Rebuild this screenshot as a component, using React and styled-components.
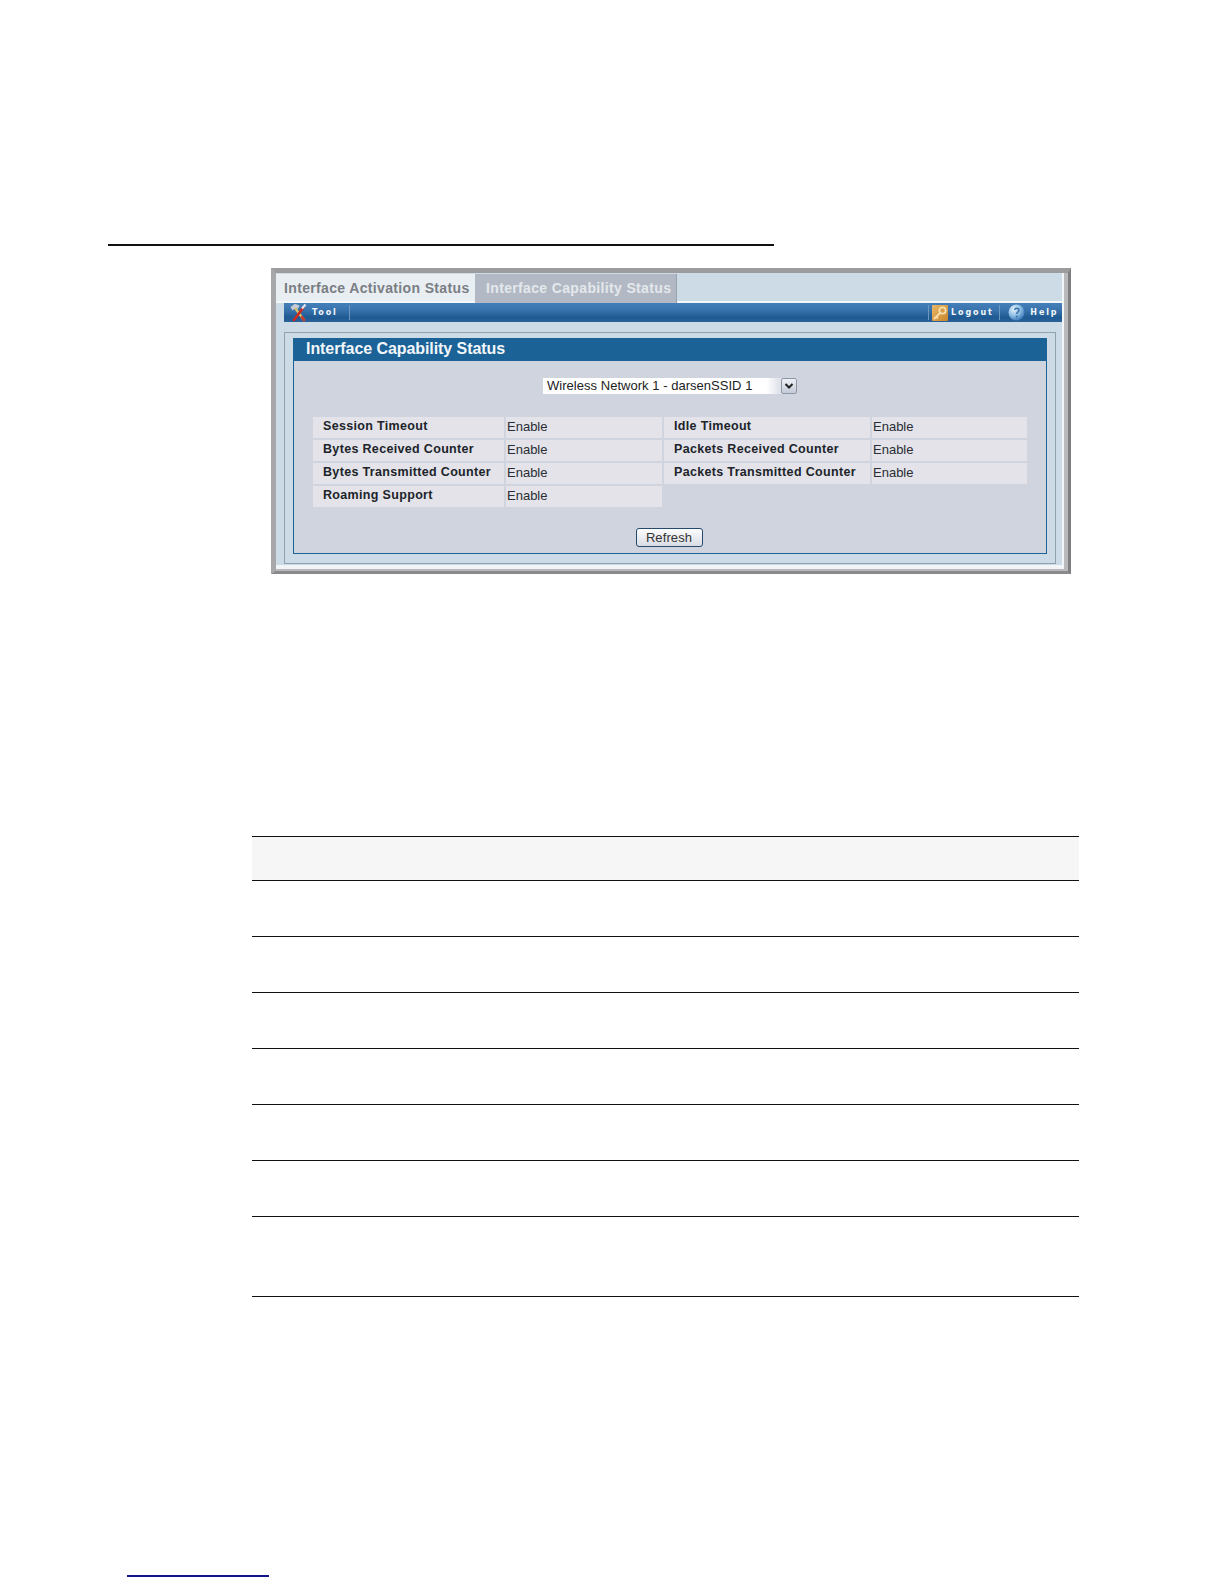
import React from "react";
import styled, { createGlobalStyle } from "styled-components";

const Global = createGlobalStyle`
  html, body { margin: 0; padding: 0; background: #fff; }
  body { font-family: "Liberation Sans", Arial, sans-serif; }
`;

const Page = styled.div`
  width: 1224px;
  height: 1584px;
  padding-top: 244px;
  box-sizing: border-box;
  overflow: hidden;
  display: flex;
  flex-direction: column;
`;

const TopRule = styled.div`
  width: 666px;
  height: 1.5px;
  margin-left: 108px;
  background: #111;
`;

const Frame = styled.div`
  width: 800px;
  height: 306px;
  margin: 22.5px 0 0 271px;
  box-sizing: border-box;
  border-style: solid;
  border-width: 5px 3px 3px 5px;
  border-color: #9c9c9e #7e7e80 #8a8a8c #a8a8ab;
  background: #cddbe6;
  box-shadow: inset -4px -2px 0 #b9b9bb, inset -6px -6px 0 #f2f5f7;
`;

const TabBar = styled.div`
  height: 30px;
  margin-right: 6px;
  box-sizing: border-box;
  border-bottom: 2px solid #f4f7f9;
  display: flex;
  align-items: flex-start;
  padding-top: 1px;
`;

const Tab = styled.div`
  height: ${(p) => (p.$active ? 29 : 27)}px;
  width: ${(p) => (p.$active ? 202 : 199)}px;
  box-sizing: border-box;
  padding-left: ${(p) => (p.$active ? 11 : 8)}px;
  padding-top: 6px;
  font-size: 14px;
  font-weight: bold;
  letter-spacing: 0.35px;
  white-space: nowrap;
  color: ${(p) => (p.$active ? "#e4e8ec" : "#7a7e84")};
  background: ${(p) => (p.$active ? "#b2b9c4" : "#e9eef3")};
  border-right: ${(p) => (p.$active ? "1px solid #9aa2ad" : "0")};
  position: relative;
  z-index: 1;
`;

const Toolbar = styled.div`
  height: 19px;
  margin: 0 6px 0 8px;
  background: linear-gradient(#447fb9 0%, #3a74ae 35%, #1f5a93 75%, #2b6098 100%);
  display: flex;
  align-items: center;
  font-family: "DejaVu Sans", sans-serif;
  font-weight: bold;
  font-size: 8px;
  letter-spacing: 1.9px;
  color: #f2f6fa;
`;

const ToolItem = styled.div`
  display: flex;
  align-items: center;
  height: 19px;
  margin-left: ${(p) => p.$ml || 0}px;
  gap: ${(p) => p.$gap || 3}px;
`;

const Sep = styled.div`
  width: 1px;
  height: 15px;
  margin-left: ${(p) => p.$ml || 0}px;
  background: #6c97c0;
`;

const Spacer = styled.div`
  flex: 1;
`;

const EndGap = styled.div`
  flex: 0 0 3.5px;
`;

const Outer = styled.div`
  width: 772px;
  height: 232px;
  margin: 10px 0 0 8px;
  box-sizing: border-box;
  border: 1px solid #8ea2ad;
  padding: 5px 0 0 8px;
`;

const Panel = styled.div`
  width: 754px;
  height: 216px;
  box-sizing: border-box;
  border: 1px solid #1b6296;
  background: #d0d4df;
  display: flex;
  flex-direction: column;
`;

const PanelHead = styled.div`
  height: 22px;
  background: #1b6296;
  color: #f2f6fa;
  font-size: 16px;
  font-weight: bold;
  line-height: 20px;
  letter-spacing: -0.07px;
  padding-left: 12px;
`;

const SelectBox = styled.div`
  align-self: center;
  width: 254px;
  height: 16px;
  margin-top: 17px;
  display: flex;
  background: linear-gradient(90deg, #fff 0%, #fff 88%, #dfe2e9 93%);
  font-size: 13px;
  line-height: 15px;
  color: #222;
  position: relative;
`;

const SelectText = styled.span`
  flex: 1;
  padding-left: 4px;
  letter-spacing: 0.03px;
  white-space: nowrap;
`;

const SelectArrow = styled.div`
  width: 16px;
  height: 16px;
  box-sizing: border-box;
  border: 1px solid #8f96a3;
  border-radius: 2px;
  background: linear-gradient(#eef0f5, #c3cad8);
  display: flex;
  align-items: center;
  justify-content: center;
`;

const DataGrid = styled.div`
  display: grid;
  grid-template-columns: 191px 156px 206px 155px;
  grid-auto-rows: 21px;
  column-gap: 2px;
  row-gap: 2px;
  margin: 23px 0 0 19px;
`;

const Label = styled.div`
  background: #e3e3e9;
  padding: 2px 0 0 10px;
  font-size: 12.5px;
  line-height: 15px;
  font-weight: bold;
  letter-spacing: 0.33px;
  color: #20242a;
  white-space: nowrap;
`;

const Value = styled.div`
  background: #e3e3e9;
  padding: 2px 0 0 1px;
  font-size: 13px;
  line-height: 15px;
  color: #2a2e34;
`;

const Refresh = styled.button`
  align-self: center;
  width: 67px;
  height: 19px;
  margin: 21px 2px 0 0;
  padding: 0;
  box-sizing: border-box;
  border: 1px solid #26496e;
  border-radius: 3px;
  background: linear-gradient(#fdfdfe, #d9dce4);
  font-family: "Liberation Sans", Arial, sans-serif;
  font-size: 13px;
  line-height: 17px;
  letter-spacing: 0.1px;
  color: #333;
`;

const Table = styled.div`
  width: 827px;
  margin: 262px 0 0 252px;
  display: flex;
  flex-direction: column;
`;

const HeaderRow = styled.div`
  height: 45px;
  box-sizing: border-box;
  background: #f6f6f6;
  border-top: 1.5px solid #111;
  border-bottom: 1.5px solid #111;
`;

const Row = styled.div`
  height: ${(p) => p.$h}px;
  box-sizing: border-box;
  border-bottom: 1.5px solid #111;
`;

const FootLink = styled.div`
  width: 142px;
  height: 1.5px;
  margin: 278px 0 0 127px;
  background: #14148a;
`;

const ToolsIcon = () => (
  <svg width="17" height="19" viewBox="0 0 17 19">
    <path d="M5 5 L14 17" stroke="#d8c06a" strokeWidth="2.4" strokeLinecap="round" />
    <path d="M12 14 L14 17" stroke="#c9352a" strokeWidth="2.4" strokeLinecap="round" />
    <path d="M13 5 L4 17" stroke="#cf2a20" strokeWidth="2.6" strokeLinecap="round" />
    <path d="M0.5 4 L5 0.8 L9.5 2.5 L8 6 L5.5 4.8 L2.5 7.5 Z" fill="#c6ccd3" />
    <path d="M12 5.5 L15.5 1.5" stroke="#e7e9ec" strokeWidth="2" />
  </svg>
);

const KeyIcon = () => (
  <svg width="16" height="16" viewBox="0 0 16 16">
    <defs>
      <linearGradient id="k" x1="0" y1="0" x2="1" y2="1">
        <stop offset="0" stopColor="#e9b667" />
        <stop offset="1" stopColor="#c9862c" />
      </linearGradient>
    </defs>
    <rect width="16" height="16" rx="1" fill="url(#k)" />
    <circle cx="10.5" cy="5.5" r="3.2" fill="none" stroke="#f7dfae" strokeWidth="1.8" />
    <path d="M8.2 7.8 L2 14 M4.2 11.8 L6 13.4" stroke="#f7dfae" strokeWidth="1.8" fill="none" />
  </svg>
);

const HelpIcon = () => (
  <svg width="17" height="17" viewBox="0 0 17 17">
    <defs>
      <radialGradient id="h" cx="0.35" cy="0.3" r="0.8">
        <stop offset="0" stopColor="#e4f2fb" />
        <stop offset="0.5" stopColor="#8fbfe6" />
        <stop offset="1" stopColor="#2a6aae" />
      </radialGradient>
    </defs>
    <circle cx="8.5" cy="8.5" r="8" fill="url(#h)" />
    <path d="M6.6 6 C6.8 3.8 11 3.8 11 6.3 C11 8 8.7 8 8.7 10" fill="none" stroke="#3f76ad" strokeWidth="1.6" />
    <circle cx="8.7" cy="12.6" r="1.1" fill="#3f76ad" />
  </svg>
);

const rows = [
  ["Session Timeout", "Enable", "Idle Timeout", "Enable"],
  ["Bytes Received Counter", "Enable", "Packets Received Counter", "Enable"],
  ["Bytes Transmitted Counter", "Enable", "Packets Transmitted Counter", "Enable"],
  ["Roaming Support", "Enable"],
];

const tableRows = [56, 56, 56, 56, 56, 56, 80];

export default function App() {
  return (
    <Page>
      <Global />
      <TopRule />
      <Frame>
        <TabBar>
          <Tab>Interface Activation Status</Tab>
          <Tab $active>Interface Capability Status</Tab>
        </TabBar>
        <Toolbar>
          <ToolItem $ml={6} $gap={5}>
            <ToolsIcon />
            <span>Tool</span>
          </ToolItem>
          <Sep $ml={11} />
          <Spacer />
          <Sep />
          <ToolItem $ml={3} $gap={3}>
            <KeyIcon />
            <span>Logout</span>
          </ToolItem>
          <Sep $ml={5} />
          <ToolItem $ml={8} $gap={5.5}>
            <HelpIcon />
            <span>Help</span>
          </ToolItem>
          <EndGap />
        </Toolbar>
        <Outer>
          <Panel>
            <PanelHead>Interface Capability Status</PanelHead>
            <SelectBox>
              <SelectText>Wireless Network 1 - darsenSSID 1</SelectText>
              <SelectArrow>
                <svg width="10" height="8" viewBox="0 0 10 8">
                  <path d="M1.5 2 L5 5.5 L8.5 2" fill="none" stroke="#222" strokeWidth="2" />
                </svg>
              </SelectArrow>
            </SelectBox>
            <DataGrid>
              {rows.map((r) =>
                r.map((t, i) =>
                  i % 2 === 0 ? (
                    <Label key={r[0] + i}>{t}</Label>
                  ) : (
                    <Value key={r[0] + i}>{t}</Value>
                  )
                )
              )}
            </DataGrid>
            <Refresh>Refresh</Refresh>
          </Panel>
        </Outer>
      </Frame>
      <Table>
        <HeaderRow />
        {tableRows.map((h, i) => (
          <Row key={i} $h={h} />
        ))}
      </Table>
      <FootLink />
    </Page>
  );
}
